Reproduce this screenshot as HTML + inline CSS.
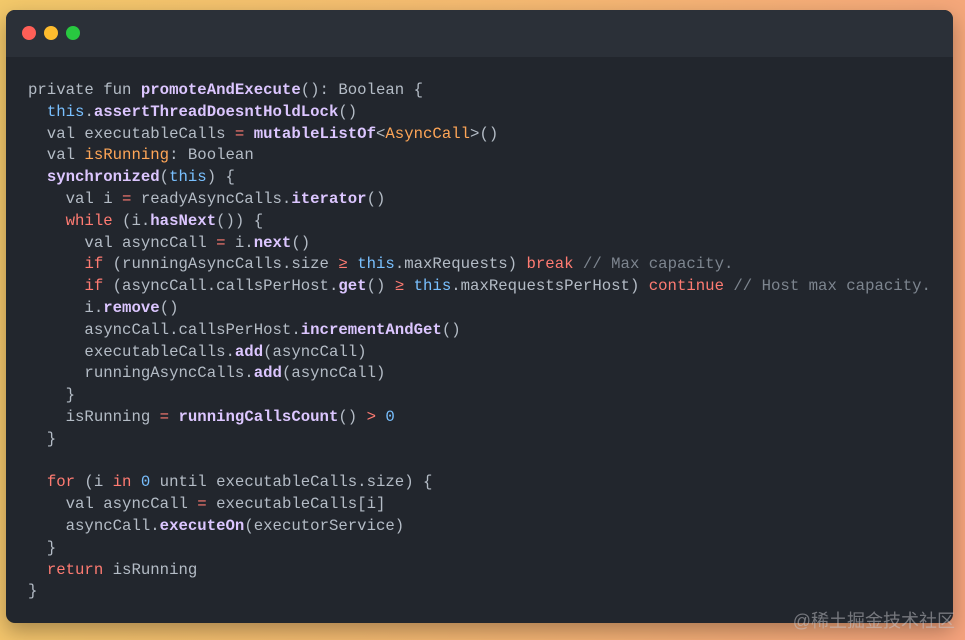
<!DOCTYPE html>
<html><head><meta charset="utf-8"><style>
html,body{margin:0;padding:0}
body{width:965px;height:640px;overflow:hidden;position:relative;
background:linear-gradient(100deg,#f2c86a 0%,#f4b872 50%,#f4a27c 100%);}
.win{position:absolute;left:6px;top:10px;width:947px;height:613px;background:#22262d;border-radius:9px;overflow:hidden;box-shadow:0 8px 20px rgba(0,0,0,.3)}
.bar{height:47px;background:#2b3038;position:relative}
.d{position:absolute;top:16px;width:14px;height:14px;border-radius:50%}
pre{margin:0;position:absolute;left:22px;top:70px;font-family:"Liberation Mono",monospace;font-size:15.68px;line-height:21.8px;color:#b4bcc6}
.k{color:#ff7b72}.f{color:#dcc6ff;font-weight:bold}.t{color:#79c0ff}.o{color:#ffa657}.c{color:#7d858f}
.wm{position:absolute;right:10px;bottom:7px;font-family:"Liberation Sans","Noto Sans CJK SC",sans-serif;font-size:18px;color:rgba(200,200,205,.5)}
</style></head><body>
<div class="win"><div class="bar">
<div class="d" style="left:16px;background:#ff5f57"></div>
<div class="d" style="left:38px;background:#febc2e"></div>
<div class="d" style="left:60px;background:#28c840"></div>
</div>
<pre>private fun <span class="f">promoteAndExecute</span>(): Boolean {
  <span class="t">this</span>.<span class="f">assertThreadDoesntHoldLock</span>()
  val executableCalls <span class="k">=</span> <span class="f">mutableListOf</span>&lt;<span class="o">AsyncCall</span>&gt;()
  val <span class="o">isRunning</span>: Boolean
  <span class="f">synchronized</span>(<span class="t">this</span>) {
    val i <span class="k">=</span> readyAsyncCalls.<span class="f">iterator</span>()
    <span class="k">while</span> (i.<span class="f">hasNext</span>()) {
      val asyncCall <span class="k">=</span> i.<span class="f">next</span>()
      <span class="k">if</span> (runningAsyncCalls.size <span class="k">≥</span> <span class="t">this</span>.maxRequests) <span class="k">break</span> <span class="c">// Max capacity.</span>
      <span class="k">if</span> (asyncCall.callsPerHost.<span class="f">get</span>() <span class="k">≥</span> <span class="t">this</span>.maxRequestsPerHost) <span class="k">continue</span> <span class="c">// Host max capacity.</span>
      i.<span class="f">remove</span>()
      asyncCall.callsPerHost.<span class="f">incrementAndGet</span>()
      executableCalls.<span class="f">add</span>(asyncCall)
      runningAsyncCalls.<span class="f">add</span>(asyncCall)
    }
    isRunning <span class="k">=</span> <span class="f">runningCallsCount</span>() <span class="k">&gt;</span> <span class="t">0</span>
  }

  <span class="k">for</span> (i <span class="k">in</span> <span class="t">0</span> until executableCalls.size) {
    val asyncCall <span class="k">=</span> executableCalls[i]
    asyncCall.<span class="f">executeOn</span>(executorService)
  }
  <span class="k">return</span> isRunning
}</pre>
</div>
<div class="wm">@稀土掘金技术社区</div>
</body></html>
